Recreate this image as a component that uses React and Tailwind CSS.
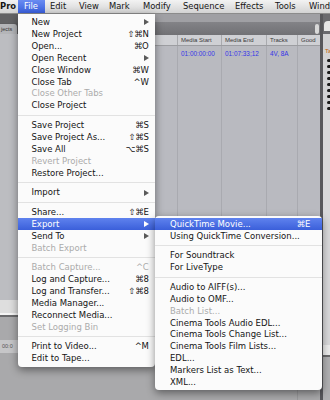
import React from 'react';

const FILE_MENU = [
  { label: 'New', arrow: true },
  { label: 'New Project', keys: '⇧⌘N' },
  { label: 'Open...', keys: '⌘O' },
  { label: 'Open Recent', arrow: true },
  { label: 'Close Window', keys: '⌘W' },
  { label: 'Close Tab', keys: '^W' },
  { label: 'Close Other Tabs', disabled: true },
  { label: 'Close Project' },
  'sep',
  { label: 'Save Project', keys: '⌘S' },
  { label: 'Save Project As...', keys: '⇧⌘S' },
  { label: 'Save All', keys: '⌥⌘S' },
  { label: 'Revert Project', disabled: true },
  { label: 'Restore Project...' },
  'sep',
  { label: 'Import', arrow: true },
  'sep',
  { label: 'Share...', keys: '⇧⌘E' },
  { label: 'Export', arrow: true, active: true },
  { label: 'Send To', arrow: true },
  { label: 'Batch Export', disabled: true },
  'sep',
  { label: 'Batch Capture...', keys: '^C', disabled: true },
  { label: 'Log and Capture...', keys: '⌘8' },
  { label: 'Log and Transfer...', keys: '⇧⌘8' },
  { label: 'Media Manager...' },
  { label: 'Reconnect Media...' },
  { label: 'Set Logging Bin', disabled: true },
  'sep',
  { label: 'Print to Video...', keys: '^M' },
  { label: 'Edit to Tape...' },
];

const EXPORT_MENU = [
  { label: 'QuickTime Movie...', keys: '⌘E', active: true },
  { label: 'Using QuickTime Conversion...' },
  'sep',
  { label: 'For Soundtrack' },
  { label: 'For LiveType' },
  'sep',
  { label: 'Audio to AIFF(s)...' },
  { label: 'Audio to OMF...' },
  { label: 'Batch List...', disabled: true },
  { label: 'Cinema Tools Audio EDL...' },
  { label: 'Cinema Tools Change List...' },
  { label: 'Cinema Tools Film Lists...' },
  { label: 'EDL...' },
  { label: 'Markers List as Text...' },
  { label: 'XML...' },
];

const MENUBAR = [
  { label: 'Pro', cls: 'w-[18px] pl-0 font-bold' },
  { label: 'File', cls: 'w-[27px] pl-[6px] text-white bg-linear-to-b from-[#6a8cf2] to-[#3a5fdc]' },
  { label: 'Edit', cls: 'w-[29px] pl-[5px]' },
  { label: 'View', cls: 'w-[30px] pl-[5px]' },
  { label: 'Mark', cls: 'w-[33px] pl-[5px]' },
  { label: 'Modify', cls: 'w-[40px] pl-[6px]' },
  { label: 'Sequence', cls: 'w-[52px] pl-[6px]' },
  { label: 'Effects', cls: 'w-[41px] pl-[6px]' },
  { label: 'Tools', cls: 'w-[34px] pl-[5px]' },
  { label: 'Window', cls: 'w-[40px] pl-[5px]' },
];

function Arrow({ white }) {
  return (
    <svg width="5" height="6" viewBox="0 0 5 6" className="shrink-0">
      <path d="M0 0 L5 3 L0 6 Z" fill={white ? '#ffffff' : '#5a5a5a'} />
    </svg>
  );
}

function MenuList({ items, itemPad }) {
  return items.map((it, i) => {
    if (it === 'sep') {
      return (
        <div key={i} className="h-[7.8px] flex items-center">
          <div className="h-px w-full bg-[#e2e2e2]" />
        </div>
      );
    }
    const color = it.active ? 'text-white' : it.disabled ? 'text-[#ababab]' : 'text-[#141414]';
    return (
      <div
        key={i}
        className={`h-[11.9px] flex items-center ${itemPad} ${color} ${it.active ? 'bg-linear-to-b from-[#5f82ee] to-[#3b5fda]' : ''}`}
      >
        <span className="flex-1 whitespace-nowrap leading-none">{it.label}</span>
        {it.keys && <span className="whitespace-nowrap leading-none tracking-[-0.3px]">{it.keys}</span>}
        {it.arrow && <Arrow white={it.active} />}
      </div>
    );
  });
}

export default function App() {
  return (
    <div className="relative w-[330px] h-[400px] overflow-hidden bg-[#a9a9ac] font-['DejaVu_Sans',sans-serif] text-[8.5px]">
      {/* menu bar */}
      <div className="h-[14px] flex items-stretch bg-linear-to-b from-[#f3f3f3] to-[#d3d3d3] border-b border-[#8c8c8c] text-[#151515] text-[8.4px]">
        {MENUBAR.map((m) => (
          <div key={m.label} className={`shrink-0 flex items-center whitespace-nowrap ${m.cls}`}>{m.label}</div>
        ))}
      </div>

      {/* window backdrop */}
      <div className="flex h-[386px]">
        {/* left strip */}
        <div className="w-[18px] flex flex-col shrink-0">
          <div className="h-[9px] bg-[#626264]" />
          <div className="h-[11px] bg-[#5e5e60] flex items-end">
            <div className="h-[10px] w-[17px] bg-[#b4b5b8] rounded-tr-[3px] flex items-center pl-[1px] text-[5.5px] text-[#333] font-['Liberation_Sans',sans-serif] overflow-hidden whitespace-nowrap">
              jects
            </div>
          </div>
          <div className="h-[266px] bg-[#bcbdc1]" />
          <div className="h-[13px] bg-[#dedede]" />
          <div className="h-[2px] bg-[#f5f5f5]" />
          <div className="h-[2px] bg-[#6a6a6c]" />
          <div className="h-[23px] bg-[#a9a9ab]" />
          <div className="h-[13px] bg-[#c6c6c8] flex items-center pl-[2px] text-[5.5px] text-[#555] font-['Liberation_Sans',sans-serif]">00:0</div>
          <div className="flex-1 bg-[#a9a9ab]" />
        </div>

        {/* browser */}
        <div className="w-[302px] flex flex-col shrink-0">
          <div className="h-[8px] bg-[#a0a0a4]" />
          <div className="h-[13px] bg-linear-to-b from-[#838387] to-[#717175] flex justify-end items-center pr-[1px]">
            <div className="w-[4px] h-[10px] rounded-[2px] bg-[#d8d8d8]" />
          </div>
          <div className="h-[11px] flex bg-[#cfd0d4] border-b border-[#9c9da1] text-[6px] text-[#3a3a3a] font-['Liberation_Sans',sans-serif]">
            <div className="w-[160px] border-r border-[#a9aaae]" />
            <div className="w-[44px] pl-[3px] flex items-center border-r border-[#a9aaae] whitespace-nowrap">Media Start</div>
            <div className="w-[45px] pl-[3px] flex items-center border-r border-[#a9aaae] whitespace-nowrap">Media End</div>
            <div className="w-[31px] pl-[3px] flex items-center border-r border-[#a9aaae] whitespace-nowrap">Tracks</div>
            <div className="flex-1 pl-[3px] flex items-center whitespace-nowrap overflow-hidden">Good</div>
          </div>
          <div className="h-[266px] flex bg-[#b9bac0] text-[6.4px] text-[#3434e8] font-['Liberation_Sans',sans-serif]">
            <div className="w-[160px] border-r border-[#a9aab0]" />
            <div className="w-[44px] pl-[3px] pt-[3px] border-r border-[#a9aab0] whitespace-nowrap">01:00:00:00</div>
            <div className="w-[45px] pl-[3px] pt-[3px] border-r border-[#a9aab0] whitespace-nowrap">01:07:33;12</div>
            <div className="w-[31px] pl-[3px] pt-[3px] border-r border-[#a9aab0] whitespace-nowrap">4V, 8A</div>
            <div className="flex-1" />
          </div>
          <div className="h-[13px] bg-[#dedede]" />
          <div className="h-[2px] bg-[#f5f5f5]" />
          <div className="h-[2px] bg-[#6a6a6c]" />
          <div className="flex-1 flex bg-[#a9a9ab]">
            <div className="w-[280px] border-r border-[#9a9a9c]" />
          </div>
        </div>

        {/* right panel */}
        <div className="flex-1 flex">
          <div className="w-[3px] bg-[#58585c]" />
          <div className="flex-1 flex flex-col">
            <div className="h-[20px] bg-[#6a6a6e] flex items-end pl-[1px] pb-[3px]">
              <div className="w-[6px] h-[10px] rounded-tl-[4px] bg-[#e6e6e6]" />
            </div>
            <div className="h-[14px] bg-[#d2d2d4]" />
            <div className="h-[9px] bg-[#d2d2d4] pl-[2px] text-[6px] leading-none text-[#c4600a] font-['Liberation_Sans',sans-serif]">Ta</div>
            <div className="bg-[#d2d2d4] pl-[4px] pt-[2px] flex flex-col gap-[3px]">
              {[0, 1, 2, 3, 4, 5, 6, 7, 8].map((d) => (
                <div key={d} className="w-[4px] h-[3px] rounded-full bg-[#1a1a1a]" />
              ))}
            </div>
            <div className="flex-1 bg-[#d8d8da]" />
            <div className="h-[10px] bg-[#ececec]" />
            <div className="h-[2px] bg-[#6a6a6c]" />
            <div className="h-[43px] bg-[#b0b0b2]" />
          </div>
        </div>
      </div>

      {/* File menu */}
      <div className="absolute left-[18px] top-[14px] w-[137px] pt-[2.4px] pb-[2px] bg-[#fbfbfb] rounded-b-[4px] shadow-[0_3px_8px_rgba(0,0,0,0.45)]">
        <MenuList items={FILE_MENU} itemPad="pl-[13.5px] pr-[6.5px]" />
      </div>

      {/* Export submenu */}
      <div className="absolute left-[155px] top-[215.7px] w-[167px] pt-[2.4px] pb-[2px] bg-[#fbfbfb] rounded-[4px] shadow-[0_3px_8px_rgba(0,0,0,0.45)]">
        <MenuList items={EXPORT_MENU} itemPad="pl-[15px] pr-[12px]" />
      </div>
    </div>
  );
}
